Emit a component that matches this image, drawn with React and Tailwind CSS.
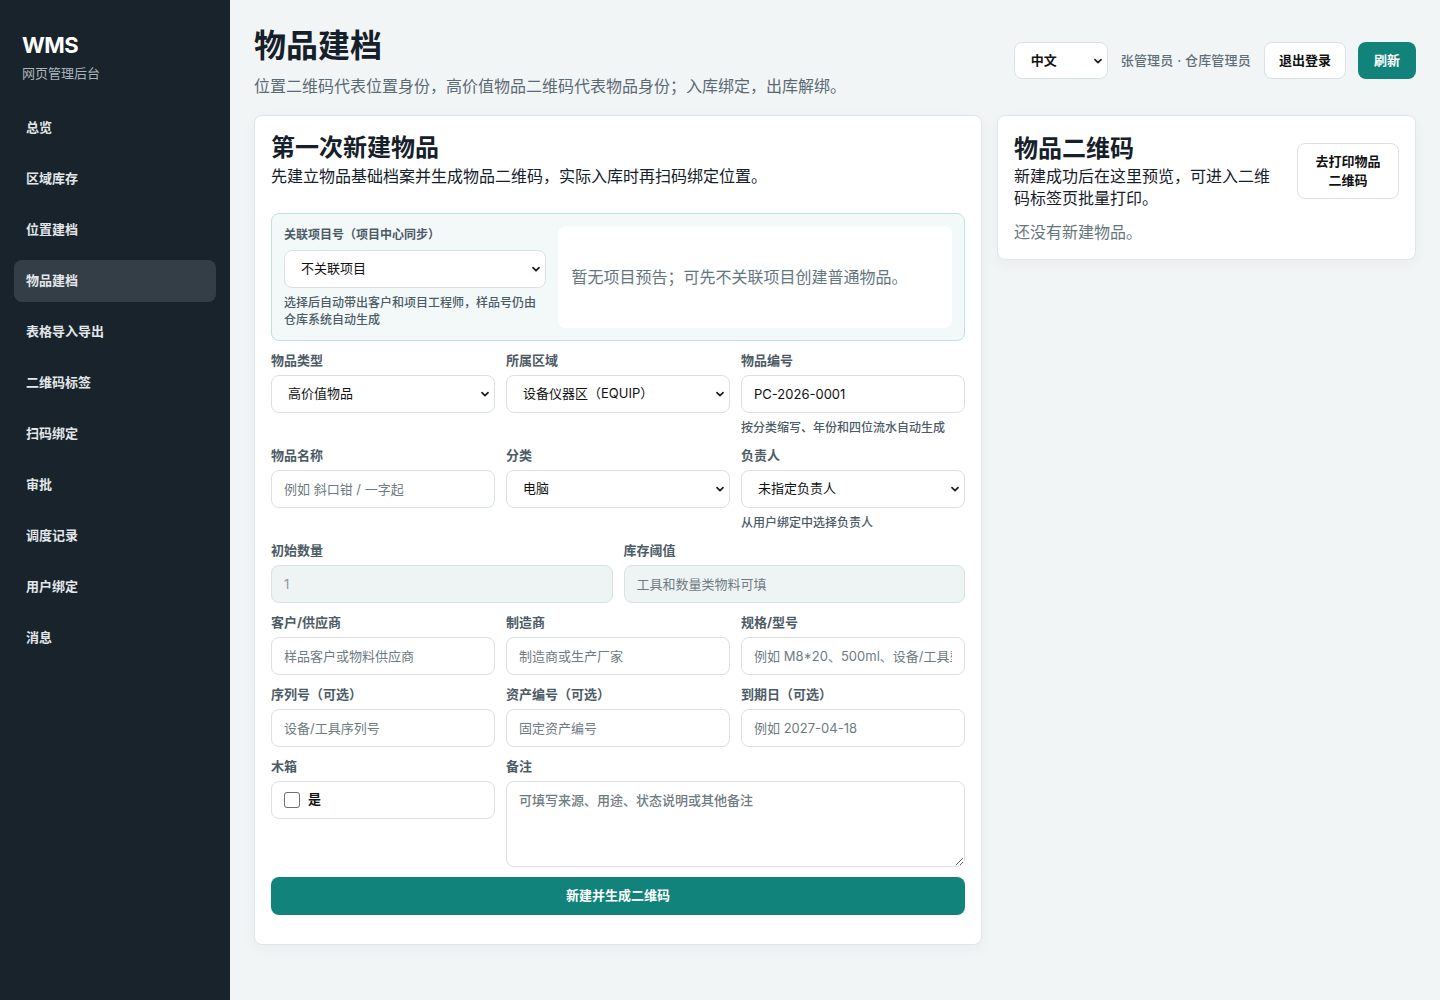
import { useState } from "react";

const NAV = [
  "总览",
  "区域库存",
  "位置建档",
  "物品建档",
  "表格导入导出",
  "二维码标签",
  "扫码绑定",
  "审批",
  "调度记录",
  "用户绑定",
  "消息",
];

const FONT = "font-['Inter','Noto_Sans_CJK_SC',sans-serif]";

function Chevron() {
  return (
    <svg
      className="pointer-events-none absolute right-[5px] top-1/2 h-[10px] w-[10px] -translate-y-1/2 text-[#222]"
      viewBox="0 0 10 10"
      fill="none"
      stroke="currentColor"
      strokeWidth="1.8"
      strokeLinecap="round"
      strokeLinejoin="round"
    >
      <path d="M2 3.6 5 6.6 8 3.6" />
    </svg>
  );
}

function Select({ value, className = "" }) {
  return (
    <div className={`relative ${className}`}>
      <select
        defaultValue={value}
        className="h-[38px] w-full appearance-none rounded-lg border border-[#d9e1e5] bg-white pl-4 pr-6 text-[13px] text-[#111] outline-none"
      >
        <option>{value}</option>
      </select>
      <Chevron />
    </div>
  );
}

function Input({ placeholder, value, disabled }) {
  return (
    <input
      defaultValue={value}
      placeholder={placeholder}
      disabled={disabled}
      className={`h-[38px] w-full rounded-lg border border-[#d9e1e5] px-3 text-[13px] outline-none placeholder:text-[#6f7b82] ${
        disabled ? "bg-[#eef3f4] text-[#8d989e]" : "bg-white text-[#111]"
      }`}
    />
  );
}

function Field({ label, help, className = "", children }) {
  return (
    <div className={`flex flex-col ${className}`}>
      <label className="mb-[7px] text-[13px] font-bold leading-4 text-[#4c5b66]">
        {label}
      </label>
      {children}
      {help && (
        <p className="mt-[7px] text-[12px] font-medium leading-4 text-[#4c5b66]">
          {help}
        </p>
      )}
    </div>
  );
}

export default function App() {
  const [active] = useState("物品建档");

  return (
    <div className={`flex min-h-screen bg-[#f2f5f6] ${FONT}`}>
      <aside className="w-[230px] shrink-0 bg-[#19232b] px-[14px] pt-[31px]">
        <div className="px-2">
          <div className="text-[22px] font-bold leading-7 tracking-[-0.5px] text-white">
            WMS
          </div>
          <div className="mt-1 text-[13px] leading-5 text-[#aab5bc]">
            网页管理后台
          </div>
        </div>
        <nav className="mt-6 flex flex-col gap-[9px]">
          {NAV.map((item) => (
            <div
              key={item}
              className={`flex h-[42px] items-center rounded-lg px-3 text-[13px] font-bold text-[#e1e7ea] ${
                item === active ? "bg-[#343e46]" : ""
              }`}
            >
              {item}
            </div>
          ))}
        </nav>
      </aside>

      <main className="flex-1 px-6 pt-6">
        <header className="flex items-start justify-between">
          <div>
            <h1 className="text-[32px] font-bold leading-[44px] text-[#15202a]">
              物品建档
            </h1>
            <p className="mt-[7px] text-[16px] leading-[22px] text-[#5a6a75]">
              位置二维码代表位置身份，高价值物品二维码代表物品身份；入库绑定，出库解绑。
            </p>
          </div>
          <div className="mt-[18px] flex items-center gap-3">
            <div className="relative w-[94px]">
              <select
                defaultValue="中文"
                className="h-[37px] w-full appearance-none rounded-lg border border-[#d9e1e5] bg-white pl-4 text-[13px] font-bold text-[#111] outline-none"
              >
                <option>中文</option>
              </select>
              <Chevron />
            </div>
            <span className="px-[1px] text-[13px] font-medium tracking-[0.2px] text-[#5f6f79]">
              张管理员 · 仓库管理员
            </span>
            <button className="h-[37px] rounded-lg border border-[#d9e1e5] bg-white px-[14px] text-[13px] font-bold text-[#111]">
              退出登录
            </button>
            <button className="h-[37px] rounded-lg bg-[#11837a] px-4 text-[13px] font-bold text-white">
              刷新
            </button>
          </div>
        </header>

        <div className="mt-[18px] grid grid-cols-[minmax(0,1fr)_419px] items-start gap-[15px]">
          {/* left card */}
          <section className="rounded-lg border border-[#dfe6e9] bg-white px-4 pb-[29px] pt-4 shadow-[0_4px_14px_rgba(20,40,50,0.04)]">
            <h2 className="text-[24px] font-bold leading-8 text-[#15202a]">
              第一次新建物品
            </h2>
            <p className="text-[16px] leading-6 text-[#15202a]">
              先建立物品基础档案并生成物品二维码，实际入库时再扫码绑定位置。
            </p>

            <div className="mt-[25px] grid grid-cols-[2fr_3fr] gap-3 rounded-lg border border-[#bfe2de] bg-[#f3f9f9] p-3">
              <div className="flex flex-col">
                <label className="mb-[6px] text-[12px] font-bold leading-[18px] text-[#4c5b66]">
                  关联项目号（项目中心同步）
                </label>
                <Select value="不关联项目" />
                <p className="mt-1.5 text-[12px] font-medium leading-[17px] text-[#4c5b66]">
                  选择后自动带出客户和项目工程师，样品号仍由仓库系统自动生成
                </p>
              </div>
              <div className="flex items-center rounded-lg bg-white px-[13px] text-[16px] text-[#66767f]">
                暂无项目预告；可先不关联项目创建普通物品。
              </div>
            </div>

            <div className="mt-[11px] grid grid-cols-6 items-start gap-x-[11px] gap-y-[11px]">
              <Field label="物品类型" className="col-span-2">
                <Select value="高价值物品" />
              </Field>
              <Field label="所属区域" className="col-span-2">
                <Select value="设备仪器区（EQUIP）" />
              </Field>
              <Field
                label="物品编号"
                className="col-span-2"
                help="按分类缩写、年份和四位流水自动生成"
              >
                <Input value="PC-2026-0001" />
              </Field>

              <Field label="物品名称" className="col-span-2">
                <Input placeholder="例如 斜口钳 / 一字起" />
              </Field>
              <Field label="分类" className="col-span-2">
                <Select value="电脑" />
              </Field>
              <Field
                label="负责人"
                className="col-span-2"
                help="从用户绑定中选择负责人"
              >
                <Select value="未指定负责人" />
              </Field>

              <Field label="初始数量" className="col-span-3">
                <Input value="1" disabled />
              </Field>
              <Field label="库存阈值" className="col-span-3">
                <Input placeholder="工具和数量类物料可填" disabled />
              </Field>

              <Field label="客户/供应商" className="col-span-2">
                <Input placeholder="样品客户或物料供应商" />
              </Field>
              <Field label="制造商" className="col-span-2">
                <Input placeholder="制造商或生产厂家" />
              </Field>
              <Field label="规格/型号" className="col-span-2">
                <Input placeholder="例如 M8*20、500ml、设备/工具型号" />
              </Field>

              <Field label="序列号（可选）" className="col-span-2">
                <Input placeholder="设备/工具序列号" />
              </Field>
              <Field label="资产编号（可选）" className="col-span-2">
                <Input placeholder="固定资产编号" />
              </Field>
              <Field label="到期日（可选）" className="col-span-2">
                <Input placeholder="例如 2027-04-18" />
              </Field>

              <Field label="木箱" className="col-span-2">
                <label className="flex h-[38px] items-center gap-2 rounded-lg border border-[#d9e1e5] bg-white px-3 text-[13px] font-bold text-[#111]">
                  <input
                    type="checkbox"
                    className="h-4 w-4 appearance-none rounded-[3px] border border-[#6b7075] bg-white"
                  />
                  是
                </label>
              </Field>
              <Field label="备注" className="col-span-4">
                <textarea
                  placeholder="可填写来源、用途、状态说明或其他备注"
                  className="h-[86px] w-full rounded-lg border border-[#d9e1e5] bg-white px-3 py-[9px] text-[13px] font-medium text-[#111] outline-none placeholder:text-[#6f7b82]"
                />
              </Field>
            </div>

            <button className="mt-[10px] h-[38px] w-full rounded-lg bg-[#11837a] text-[13px] font-bold text-white">
              新建并生成二维码
            </button>
          </section>

          {/* right card */}
          <section className="rounded-lg border border-[#dfe6e9] bg-white px-4 pb-4 pt-[17px] shadow-[0_4px_14px_rgba(20,40,50,0.04)]">
            <div className="flex items-center justify-between gap-4">
              <div className="w-[262px]">
                <h2 className="text-[24px] font-bold leading-8 text-[#15202a]">
                  物品二维码
                </h2>
                <p className="text-[16px] leading-[22px] text-[#15202a]">
                  新建成功后在这里预览，可进入二维码标签页批量打印。
                </p>
              </div>
              <button className="w-[102px] rounded-lg border border-[#d9e1e5] bg-white px-3 py-2 text-[13px] font-bold leading-[19px] text-[#111]">
                去打印物品二维码
              </button>
            </div>
            <p className="mt-3 text-[16px] leading-[22px] text-[#66767f]">
              还没有新建物品。
            </p>
          </section>
        </div>
      </main>
    </div>
  );
}
